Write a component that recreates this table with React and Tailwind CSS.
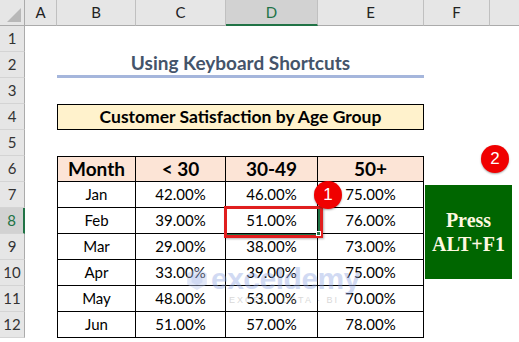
const cols = ["A", "B", "C", "D", "E", "F", ""];

const data = [
    ["Jan", "42.00%", "46.00%", "75.00%"],
    ["Feb", "39.00%", "51.00%", "76.00%"],
    ["Mar", "29.00%", "38.00%", "73.00%"],
    ["Apr", "33.00%", "39.00%", "75.00%"],
    ["May", "48.00%", "53.00%", "70.00%"],
    ["Jun", "51.00%", "57.00%", "78.00%"],
];

const Badge = ({ n, className }) => (
    <div className={`absolute w-[28px] h-[28px] rounded-full bg-[#f00000] text-white flex items-center justify-center text-[17px] font-['Liberation_Sans',sans-serif] shadow-[0_1px_2px_rgba(0,0,0,0.35)] ${className}`}>
        {n}
    </div>
);

const RowHead = ({ n, active }) => (
    <div className={`flex items-center justify-center border-b border-[#d4d4d4] text-[15px] ${active ? "bg-[#d2d2d2] text-[#217346] border-r-2 border-r-[#217346]" : "bg-[#e6e6e6] text-[#333] border-r border-r-[#ababab]"}`}>
        {n}
    </div>
);

const App = () => {
    return (
        <main className="relative w-[519px] h-[342px] overflow-hidden bg-white font-['Lato',sans-serif] text-black">
            <div className="grid grid-cols-[25px_32px_79px_90px_92px_106px_66px_29px] grid-rows-[26px_repeat(12,26px)]">
                {/* corner */}
                <div className="bg-[#e6e6e6] border-r border-b border-[#ababab] relative">
                    <div className="absolute right-[3px] bottom-[3px] w-0 h-0 border-l-[14px] border-l-transparent border-b-[14px] border-b-[#b8b8b8]" />
                </div>
                {cols.map((c, i) => (
                    <div
                        key={i}
                        className={`flex items-center justify-center text-[15px] ${c === "D" ? "bg-[#d2d2d2] text-[#217346] border-b-2 border-b-[#217346]" : "bg-[#e6e6e6] text-[#222] border-b border-b-[#ababab]"} ${i < 6 ? "border-r border-r-[#c0c0c0]" : ""}`}
                    >
                        {c}
                    </div>
                ))}

                {/* row 1 */}
                <RowHead n={1} />
                <div className="col-span-7" />

                {/* row 2 */}
                <RowHead n={2} />
                <div />
                <div className="col-span-4 flex items-center justify-center border-b-[3px] border-b-[#a5b6dc] text-[19px] font-bold text-[#44546a]">
                    Using Keyboard Shortcuts
                </div>
                <div className="col-span-2" />

                {/* row 3 */}
                <RowHead n={3} />
                <div className="col-span-7" />

                {/* row 4 */}
                <RowHead n={4} />
                <div />
                <div className="col-span-4 flex items-center justify-center bg-[#fff2cc] border border-black text-[17.5px] font-bold">
                    Customer Satisfaction by Age Group
                </div>
                <div className="col-span-2" />

                {/* row 5 */}
                <RowHead n={5} />
                <div className="col-span-7" />

                {/* row 6 header */}
                <RowHead n={6} />
                <div />
                {["Month", "< 30", "30-49", "50+"].map((h, i) => (
                    <div
                        key={h}
                        className={`flex items-center justify-center bg-[#fce4d6] border-t border-b border-r border-black text-[19px] font-bold ${i === 0 ? "border-l" : ""}`}
                    >
                        {h}
                    </div>
                ))}
                <div className="col-span-2" />

                {data.map((row, r) => (
                    <div key={r} className="contents">
                        <RowHead n={r + 7} active={r === 1} />
                        <div />
                        {row.map((v, i) => (
                            <div
                                key={i}
                                className={`flex items-center justify-center border-b border-r border-black text-[15px] ${i === 0 ? "border-l" : ""}`}
                            >
                                {v}
                            </div>
                        ))}
                        <div className="col-span-2" />
                    </div>
                ))}
            </div>

            {/* watermark */}
            <div className="absolute left-[186px] top-[264px] flex flex-col items-center opacity-40 pointer-events-none">
                <div className="flex items-center gap-[3px]">
                    <svg width="22" height="24" viewBox="0 0 20 22">
                        <path d="M10 1 L19 6 L19 16 L10 21 L1 16 L1 6 Z" fill="#b7c6ee" />
                        <path d="M10 6 L15 9 L15 14 L10 17 L5 14 L5 9 Z" fill="#8ea5e3" />
                    </svg>
                    <span className="text-[30px] leading-none font-bold text-[#8ea5e3] font-['Liberation_Sans',sans-serif] tracking-[-0.5px]">exceldemy</span>
                </div>
                <span className="text-[9px] tracking-[2px] text-[#a0a0a0] ml-[22px] font-['Liberation_Sans',sans-serif]">EXCEL · DATA · BI</span>
            </div>

            {/* selection on D8 */}
            <div className="absolute left-[224px] top-[206px] w-[99px] h-[32px] border-[3px] border-[#e01e1e] shadow-[1px_1px_2px_rgba(0,0,0,0.3)]">
                <div className="absolute inset-0 border-r-2 border-b border-[#217346]" />
                <div className="absolute right-[-1px] bottom-[-1px] w-[5px] h-[5px] bg-[#217346] border border-white" />
            </div>

            <Badge n={1} className="left-[314px] top-[181px]" />
            <Badge n={2} className="left-[481px] top-[145px]" />

            {/* shape */}
            <div className="absolute left-[425px] top-[185px] w-[87px] h-[94px] bg-[#006600] flex flex-col items-center justify-center font-['Liberation_Serif',serif] font-bold text-[20px] leading-[24px] text-[#fff8e0]">
                <span>Press</span>
                <span>ALT+F1</span>
            </div>
        </main>
    );
};

export default App;
